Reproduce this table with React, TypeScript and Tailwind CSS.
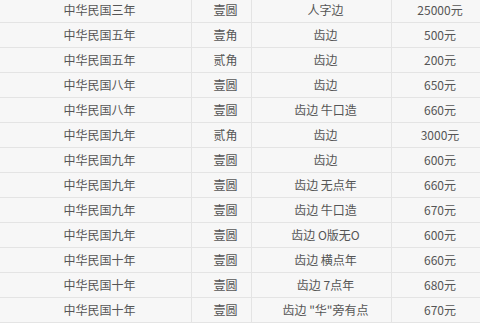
const rows: [string, string, string, string][] = [
  ["中华民国三年", "壹圆", "人字边", "25000元"],
  ["中华民国五年", "壹角", "齿边", "500元"],
  ["中华民国五年", "贰角", "齿边", "200元"],
  ["中华民国八年", "壹圆", "齿边", "650元"],
  ["中华民国八年", "壹圆", "齿边 牛口造", "660元"],
  ["中华民国九年", "贰角", "齿边", "3000元"],
  ["中华民国九年", "壹圆", "齿边", "600元"],
  ["中华民国九年", "壹圆", "齿边 无点年", "660元"],
  ["中华民国九年", "壹圆", "齿边 牛口造", "670元"],
  ["中华民国九年", "壹圆", "齿边 O版无O", "600元"],
  ["中华民国十年", "壹圆", "齿边 横点年", "660元"],
  ["中华民国十年", "壹圆", "齿边 7点年", "680元"],
  ["中华民国十年", "壹圆", "齿边 \"华\"旁有点", "670元"],
];

export default function App() {
  return (
    <div
      className="w-[480px] h-[323px] overflow-hidden bg-[#f7f7f7] text-[12px] text-[#555]"
      style={{ fontFamily: '"Noto Sans CJK SC", "Noto Sans", sans-serif' }}
    >
      <div className="mt-[-2px]">
        {rows.map((r, i) => (
          <div
            key={i}
            className="grid grid-cols-[192px_60px_140px_1fr] h-[25px] border-b border-[#e4e4e4]"
          >
            <div className="flex items-center justify-center pl-2 border-r border-[#e4e4e4]">{r[0]}</div>
            <div className="flex items-center justify-center pl-2 border-r border-[#e4e4e4]">{r[1]}</div>
            <div className="flex items-center justify-center pl-2 border-r border-[#e4e4e4] whitespace-pre">{r[2]}</div>
            <div className="flex items-center justify-center pl-2">{r[3]}</div>
          </div>
        ))}
      </div>
    </div>
  );
}
